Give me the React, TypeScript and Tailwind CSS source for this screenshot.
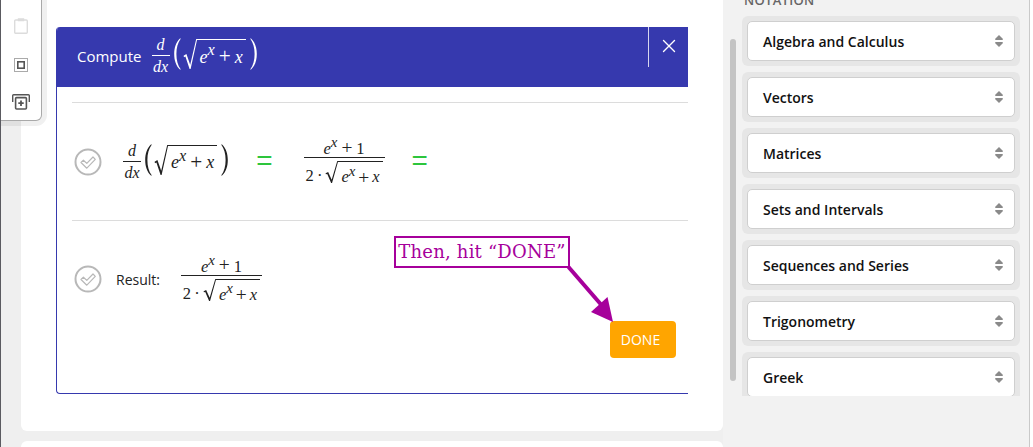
import type { ReactNode } from 'react';
import { X } from 'lucide-react';

const Frac = ({ top, bottom, width }: { top: ReactNode; bottom: ReactNode; width: string }) => (
  <span className={`inline-flex flex-col items-center ${width}`}>
    <span className="flex h-[23px] items-end whitespace-nowrap leading-[20px]">{top}</span>
    <span className="h-px w-full bg-current" />
    <span className="flex h-[24px] items-start whitespace-nowrap leading-[22px]">{bottom}</span>
  </span>
);

const Paren = ({ flip }: { flip?: boolean }) => (
  <svg viewBox="0 0 7 32" className={`h-[32px] w-[7px] ${flip ? 'scale-x-[-1]' : ''}`} fill="currentColor">
    <path d="M6.2 0.2 C2 4 0.2 9.6 0.2 16 C0.2 22.4 2 28 6.2 31.8 L6.7 31.3 C3.8 27.4 2.4 22.4 2.4 16 C2.4 9.6 3.8 4.6 6.7 0.7 Z" />
  </svg>
);

const Radical = ({ width }: { width: string }) => (
  <svg viewBox="0 0 14 28" preserveAspectRatio="none" className={`${width} self-stretch`} fill="currentColor">
    <path d="M0.6 15.6 L3.4 14 L7.2 24 L13.2 0 L14 0 L14 1 L7.6 28 L6.6 28 L2.4 16.4 L1 17 Z" />
  </svg>
);

const EToX = () => (
  <span className="italic">
    e<span className="relative -top-[0.45em] text-[0.9em]">x</span>
  </span>
);

const Plus = ({ gap }: { gap: string }) => <span className={`${gap} text-[1.18em] not-italic leading-none`}>+</span>;

const Derivative = () => (
  <span className="inline-flex items-center font-['Liberation_Serif',serif] text-[18px]">
    <span className="text-[16px]">
      <Frac width="w-[18px]" top={<span className="italic">d</span>} bottom={<span className="italic">dx</span>} />
    </span>
    <span className="-mt-[4px] ml-[4px] inline-flex items-center">
      <Paren />
      <span className="ml-[2px] inline-flex h-[30px] items-stretch">
        <Radical width="w-[14px]" />
        <span className="flex items-center whitespace-nowrap border-t border-current pl-[3px] pr-[3px] pt-[5px]">
          <EToX />
          <Plus gap="mx-[4px]" />
          <span className="italic">x</span>
        </span>
      </span>
      <span className="ml-[4px]"><Paren flip /></span>
    </span>
  </span>
);

const ResultFrac = () => (
  <span className="inline-flex font-['Liberation_Serif',serif] text-[16.5px] text-[#222]">
    <span className="inline-flex w-[81px] flex-col items-center">
      <span className="flex h-[23px] items-end whitespace-nowrap leading-[16px]">
        <EToX />
        <Plus gap="mx-[4px]" />
        <span>1</span>
      </span>
      <span className="h-px w-full bg-current" />
      <span className="mt-[3px] flex h-[28px] items-start whitespace-nowrap">
        <span className="mt-[5px] leading-[20px]">2&thinsp;·</span>
        <span className="ml-[3px] inline-flex h-[22px] items-stretch">
          <Radical width="w-[13px]" />
          <span className="flex items-center whitespace-nowrap border-t border-current pl-[3px] pr-[3px] pt-[10px] leading-none">
            <EToX />
            <Plus gap="mx-[3px]" />
            <span className="italic">x</span>
          </span>
        </span>
      </span>
    </span>
  </span>
);

const CheckCircle = () => (
  <svg viewBox="0 0 28 28" className="h-[28px] w-[28px] shrink-0" fill="none" stroke="#b8b8b8">
    <circle cx="14" cy="14" r="12.5" strokeWidth="2" />
    <path d="M7 14.5 L9.4 12.2 L12.8 15.4 L19 9 L21.3 11.4 L12.8 20.2 Z" strokeWidth="1.2" strokeLinejoin="round" />
  </svg>
);

const Equals = () => <span className="font-['Liberation_Sans',sans-serif] text-[28px] leading-none text-[#2dc53c]">=</span>;

const Caret = () => (
  <svg viewBox="0 0 8 12" className="h-[12px] w-[8px]" fill="#8a8a8a">
    <path d="M4 0 L8 4 Q8 5 7 5 L1 5 Q0 5 0 4 Z" />
    <path d="M4 12 L8 8 Q8 7 7 7 L1 7 Q0 7 0 8 Z" />
  </svg>
);

const NOTATIONS = ['Algebra and Calculus', 'Vectors', 'Matrices', 'Sets and Intervals', 'Sequences and Series', 'Trigonometry', 'Greek'];

const Toolbar = () => (
  <div className="absolute -top-[10px] left-0 flex h-[131px] w-[41px] flex-col items-center rounded-br-[6px] border border-l-0 border-[#a9a9a9] bg-white pt-[27px] shadow-[0_0_0_5px_rgba(0,0,0,0.06)]">
    <svg viewBox="0 0 14 16" className="h-[16px] w-[14px]" fill="none" stroke="#dcdcdc" strokeWidth="1.4">
      <rect x="0.7" y="2" width="12.6" height="13.3" rx="1" />
      <path d="M4.5 2.6 V1 H9.5 V2.6 Z" fill="#dcdcdc" />
    </svg>
    <svg viewBox="0 0 14 14" className="mt-[24px] h-[14px] w-[14px]" fill="none" stroke="#555">
      <rect x="0.5" y="0.5" width="13" height="13" strokeDasharray="1 1" />
      <rect x="3.8" y="3.8" width="6.4" height="6.4" strokeWidth="1.6" />
    </svg>
    <svg viewBox="0 0 18 16" className="mt-[22px] h-[16px] w-[18px]" fill="none" stroke="#555" strokeWidth="1.4">
      <path d="M0.7 8 V1.6 Q0.7 0.7 1.6 0.7 H16.4 Q17.3 0.7 17.3 1.6 V8" />
      <rect x="3.6" y="3.6" width="10.8" height="11.4" rx="1" strokeWidth="1.6" />
      <path d="M9 6.5 V12 M6.3 9.2 H11.7" strokeWidth="1.8" />
    </svg>
  </div>
);

const Annotation = () => (
  <>
    <div className="absolute left-[337px] top-[209px] z-10 flex h-[32px] w-[176px] items-center justify-center whitespace-nowrap border-2 border-[#a6009b] bg-white pb-[2px] font-['DejaVu_Serif',serif] text-[18px] font-light tracking-[0.2px] text-[#a6009b]">
      Then, hit “DONE”
    </div>
    <svg viewBox="0 0 60 70" className="absolute left-[508px] top-[238px] z-10 h-[70px] w-[60px]" fill="#a6009b" stroke="none">
      <path d="M3.5 2 L36 39.5" stroke="#a6009b" strokeWidth="4" />
      <path d="M48 57 L26 47 L42.5 32 Z" />
    </svg>
  </>
);

export default function App() {
  return (
    <div className="relative flex h-[447px] w-[1033px] overflow-hidden border-l border-[#5a5a60] bg-[#efefef] font-['Open_Sans',sans-serif]">
      <main className="ml-[20px] flex w-[702px] shrink-0 flex-col gap-[10px]">
        <section className="h-[431px] shrink-0 rounded-b-[6px] bg-white px-[35px] pt-[27px]">
          <div className="relative h-[367px] overflow-hidden rounded-tl-[4px] rounded-bl-[4px] border-b border-l border-[#3639ae]">
            <header className="-ml-px flex h-[60px] items-start justify-between bg-[#3639ae] text-white">
              <div className="flex items-center pl-[21px] pt-[5px]">
                <span className="mr-[10px] text-[15px]">Compute</span>
                <Derivative />
              </div>
              <button className="flex h-[40px] w-[40px] items-center justify-center border-l border-white/80 pb-[2px]">
                <X size={22} strokeWidth={1.5} />
              </button>
            </header>
            <div className="pl-[15px]">
              <div className="mt-[15px] h-px bg-[#dcdcdc]" />
              <div className="flex h-[117px] items-center pl-[2px] text-[#222]">
                <CheckCircle />
                <span className="ml-[21px]"><Derivative /></span>
                <span className="ml-[28px]"><Equals /></span>
                <span className="ml-[31px]"><ResultFrac /></span>
                <span className="ml-[27px]"><Equals /></span>
              </div>
              <div className="h-px bg-[#dcdcdc]" />
              <div className="mt-[34px] flex h-[48px] items-center pl-[2px] text-[#222]">
                <CheckCircle />
                <span className="ml-[14px] text-[14px]">Result:</span>
                <span className="ml-[21px]"><ResultFrac /></span>
              </div>
              <div className="mt-[18px] flex justify-end pr-[12px]">
                <button className="flex h-[37px] w-[66px] items-center justify-center rounded-[4px] bg-[#ffa500] pr-[5px] text-[14px] text-white">
                  DONE
                </button>
              </div>
            </div>
            <Annotation />
          </div>
        </section>
        <section className="h-[40px] shrink-0 rounded-t-[6px] bg-white" />
      </main>

      <aside className="flex h-full w-[307px] shrink-0 border-r border-[#c9c9c9] bg-[#f2f2f2] pl-[7px]">
        <div className="mt-[39px] h-[342px] w-[6px] rounded-full bg-[#c4c4c4]" />
        <div className="ml-[6px] h-[396px] w-[278px] overflow-hidden">
          <div className="-mt-[8px] ml-[2px] text-[13px] font-semibold leading-[16px] tracking-[0.3px] text-[#666]">NOTATION</div>
          <div className="mt-[8px] flex flex-col gap-[6px]">
            {NOTATIONS.map((name) => (
              <div key={name} className="rounded-[6px] bg-[#e6e6e6] p-[5px]">
                <div className="flex h-[40px] items-center justify-between rounded-[5px] border border-[#cfcfcf] bg-white pl-[15px] pr-[11px] text-[14px] font-semibold text-[#111]">
                  {name}
                  <Caret />
                </div>
              </div>
            ))}
          </div>
        </div>
      </aside>
      <div className="w-[3px] bg-white" />

      <Toolbar />
    </div>
  );
}
